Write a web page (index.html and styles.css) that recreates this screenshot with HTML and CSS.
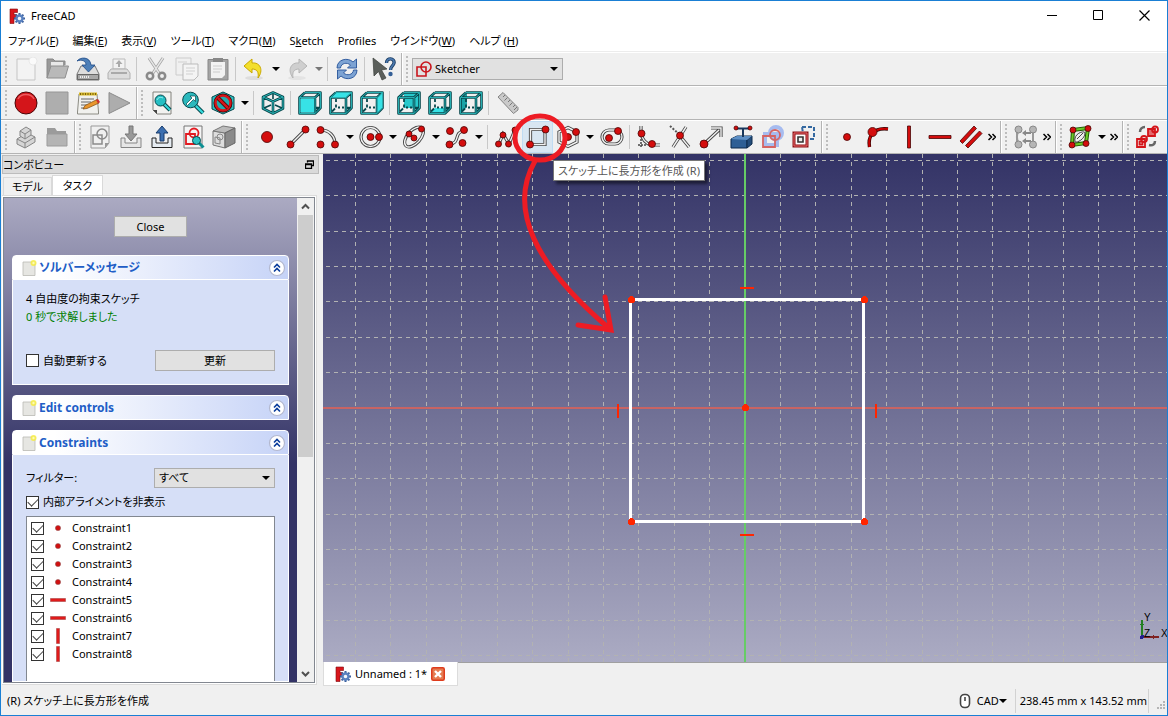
FILE: index.html
```html
<!DOCTYPE html>
<html lang="ja">
<head>
<meta charset="utf-8">
<title>FreeCAD</title>
<link rel="stylesheet" href="styles.css">
</head>
<body>
<svg class="defs" aria-hidden="true">
  <symbol id="logo" viewBox="0 0 16 16">
    <path d="M1 1H8.500V4.500H5V6.500H7.500V9.500H5V15.500H1Z" fill="#d8161c" stroke="#7d0a0e" stroke-width=".6"/>
    <path d="M10.500 5V16M5 10.500H16M6.600 6.600L14.400 14.400M14.400 6.600L6.600 14.400" stroke="#3a5f9c" stroke-width="2"/>
    <circle cx="10.500" cy="10.500" r="3" fill="#f4f6fa" stroke="#5a82c0" stroke-width="2.400"/>
  </symbol>
  <symbol id="drop" viewBox="0 0 8 4"><path d="M0 0H8L4 4Z" fill="currentColor"/></symbol>
  <symbol id="more" viewBox="0 0 8 8"><path d="M.5 1L3.500 4L.5 7M4.500 1L7.500 4L4.500 7" fill="none" stroke="#000" stroke-width="1.500"/></symbol>
  <symbol id="wire" viewBox="0 0 24 24">
    <g fill="none" stroke="#07484d" stroke-width="2.600" stroke-linejoin="round"><path d="M1.500 6.500H17V22.500H1.500ZM7 1.500H22.500V17H17M1.500 6.500L7 1.500M17 6.500L22.500 1.500M17 22.500L22.500 17"/><path d="M7 8V11M7 13.500V16.500M9 16.500H11M13 16.500H15M3 20.500L6 17.500" stroke-width="1.800"/></g>
    <path d="M1.500 6.500H17V22.500H1.500ZM7 1.500H22.500V17M1.500 6.500L7 1.500M17 6.500L22.500 1.500M17 22.500L22.500 17" fill="none" stroke="#2bb9bb" stroke-width=".9"/>
  </symbol>
  <symbol id="page" viewBox="0 0 16 16">
    <path d="M2 2H14V15.500H2Z" fill="#e6e6e2" stroke="#b9b9b4" stroke-width=".8"/><circle cx="12.500" cy="3" r="3" fill="#f8ee3a" opacity=".8"/><circle cx="12.500" cy="3" r="1.200" fill="#fffbb0"/>
  </symbol>
  <symbol id="fold" viewBox="0 0 18 18">
    <circle cx="9" cy="9" r="7.500" fill="#fff" stroke="#b3b8cf" stroke-width="1.200"/><path d="M6 8.500L9 5.500L12 8.500M6 12.500L9 9.500L12 12.500" fill="none" stroke="#0a3c9b" stroke-width="1.600"/>
  </symbol>
</svg>

<div class="window">
  <header class="titlebar">
    <svg class="logo"><use href="#logo"/></svg>
    <span class="app-name">FreeCAD</span>
    <button class="win-btn" aria-label="最小化"><svg viewBox="0 0 11 11"><path d="M0 5.500H10" stroke="#000"/></svg></button>
    <button class="win-btn" aria-label="最大化"><svg viewBox="0 0 11 11"><path d="M.5 .5H9.500V9.500H.5Z" fill="none" stroke="#000"/></svg></button>
    <button class="win-btn" aria-label="閉じる"><svg viewBox="0 0 11 11"><path d="M.5 .5L10.500 10.500M10.500 .5L.5 10.500" stroke="#000" stroke-width="1.200"/></svg></button>
  </header>
  <nav class="menu">
    <button>ファイル(<u>F</u>)</button><button>編集(<u>E</u>)</button><button>表示(<u>V</u>)</button><button>ツール(<u>T</u>)</button><button>マクロ(<u>M</u>)</button><button>S<u>k</u>etch</button><button>Profiles</button><button>ウインドウ(<u>W</u>)</button><button>ヘルプ (<u>H</u>)</button>
  </nav>

  <div class="bar-row">
    <div class="bar">
      <button class="tool" aria-label="新規"><svg viewBox="0 0 24 24"><path d="M3 2H21V23H3Z" fill="#f3f3f3" stroke="#c5c5c5"/><circle cx="19" cy="4" r="4" fill="#fafafa" stroke="#ddd" stroke-width=".6"/></svg></button>
      <button class="tool" aria-label="開く"><svg viewBox="0 0 24 24"><path d="M2 21V2H8L10 4H20V8" fill="#999" stroke="#888"/><path d="M6 5H18V10H6Z" fill="#e8e8e8"/><path d="M2 21L6 9H23.500L20 21Z" fill="#b9b9b9" stroke="#8e8e8e"/></svg></button>
      <button class="tool" aria-label="保存"><svg viewBox="0 0 24 24"><path d="M5 9H19L23 17V23H1V17Z" fill="#ddd" stroke="#777"/><path d="M1.500 17.500H22.500V22.500H1.500Z" fill="#a8a8a8" stroke="#666"/><path d="M4 20H13" stroke="#eee" stroke-width="2" stroke-dasharray="1 1"/><path d="M1 4C4 0 14 -1 15 8H19L12.500 15L6 8H10C10 4 6 2 1 4Z" fill="#4d7fb8" stroke="#204a87" stroke-width=".8"/></svg></button>
      <button class="tool" aria-label="印刷"><svg viewBox="0 0 24 24"><path d="M6 2H18V12H6Z" fill="#f2f2f2" stroke="#bbb"/><path d="M12 3L8.500 7H11V10H13V7H15.500Z" fill="#aaa"/><path d="M4 12H20L23 16V22H1V16Z" fill="#ddd" stroke="#b0b0b0"/><path d="M4 16H20" stroke="#999" stroke-width="1.500"/></svg></button>
      <i class="sep"></i>
      <button class="tool" aria-label="切り取り"><svg viewBox="0 0 24 24"><path d="M5 1L15 16M19 1L9 16" stroke="#a0a0a0" stroke-width="3"/><path d="M5 1L15 16M19 1L9 16" stroke="#e5e5e5" stroke-width="1.400"/><g fill="none" stroke="#8a8a8a" stroke-width="2.500"><circle cx="6" cy="19" r="3.200"/><circle cx="18" cy="19" r="3.200"/></g></svg></button>
      <button class="tool" aria-label="コピー"><svg viewBox="0 0 24 24"><path d="M1 1H16V18H1Z" fill="#f0f0f0" stroke="#ccc"/><path d="M8 7H23V19L19 23H8Z" fill="#f4f4f4" stroke="#bbb"/><path d="M3 5H12M11 11H20M11 14H20M11 17H18" stroke="#d0d0d0"/></svg></button>
      <button class="tool" aria-label="貼り付け"><svg viewBox="0 0 24 24"><path d="M2 2.500H22V23H2Z" fill="#a4a4a4" stroke="#888"/><path d="M5 5H19V18L16 21H5Z" fill="#f2f2f2"/><path d="M7 1H17V5H7Z" fill="#888"/><path d="M7 9H16M7 12H16M7 15H14" stroke="#ccc"/></svg></button>
      <i class="sep"></i>
      <button class="tool drop" aria-label="元に戻す"><svg viewBox="0 0 24 24"><ellipse cx="12" cy="21" rx="9" ry="2" fill="#ddd"/><path d="M2 9L10 2V6C18 5 22 13 16 21C17 15 15 12 10 12V16Z" fill="#f3df2c" stroke="#c9a800"/></svg><svg class="arrow"><use href="#drop"/></svg></button>
      <button class="tool drop" aria-label="やり直し"><svg viewBox="0 0 24 24"><ellipse cx="12" cy="21" rx="9" ry="2" fill="#e3e3e3"/><path d="M22 9L14 2V6C6 5 2 13 8 21C7 15 9 12 14 12V16Z" fill="#cfcfcf" stroke="#b5b5b5"/></svg><svg class="arrow dim"><use href="#drop"/></svg></button>
      <i class="sep"></i>
      <button class="tool" aria-label="更新"><svg viewBox="0 0 24 24"><g fill="#7da3d3" stroke="#27539a" stroke-width=".9"><path d="M2 11C2 2 13 0 18 5L21.500 2V11H12.500L15.500 8C12 5 6 6 5.500 11Z"/><path d="M22 13C22 22 11 24 6 19L2.500 22V13H11.500L8.500 16C12 19 18 18 18.500 13Z"/></g></svg></button>
      <i class="sep"></i>
      <button class="tool" aria-label="ヘルプ"><svg viewBox="0 0 24 24"><path d="M1 1L15 12L9.500 13L14 21L10 23L6.500 14.500L2 19Z" fill="#5b5f5b" stroke="#3a3d3a" stroke-width=".7"/><path d="M14.500 6C14.500 0 23 1 22 6C21.500 9 18.500 9 18.500 13" fill="none" stroke="#1d3f66" stroke-width="3.400"/><path d="M14.500 6C14.500 0 23 1 22 6C21.500 9 18.500 9 18.500 13" fill="none" stroke="#4c7ab0" stroke-width="1.600"/><circle cx="18.500" cy="17" r="2.200" fill="#345f96"/></svg></button>
    </div>
    <div class="bar last">
      <label class="workbench">
        <svg class="wb-icon" viewBox="0 0 16 16"><g fill="none" stroke="#c9151c" stroke-width="1.600"><path d="M1 6H10V15H1Z"/><circle cx="10" cy="6" r="5"/></g></svg>
        <select aria-label="ワークベンチ"><option>Sketcher</option></select>
        <svg class="arrow"><use href="#drop"/></svg>
      </label>
    </div>
  </div>

  <div class="bar-row">
    <div class="bar">
      <button class="tool" aria-label="マクロの記録"><svg viewBox="0 0 24 24"><circle cx="12" cy="12" r="11" fill="#d4151a" stroke="#4a0507"/><path d="M4 8C7 2 17 2 20 8" fill="none" stroke="#ee5a5e" stroke-width="1.500"/></svg></button>
      <button class="tool" aria-label="記録の停止"><svg viewBox="0 0 24 24"><path d="M1 1H23V23H1Z" fill="#aeaeae" stroke="#969696"/></svg></button>
      <button class="tool" aria-label="マクロ"><svg viewBox="0 0 24 24"><path d="M3 3H21L22.500 21V23H1.500V21Z" fill="#f1f1ee" stroke="#8c8c84"/><path d="M3 1.500H21V4.500H3Z" fill="#d9b92a"/><path d="M4 3H21" stroke="#7b6410" stroke-width="2" stroke-dasharray="1 1.500"/><path d="M5 8H18M5 11H15M5 14H12M5 17H9" stroke="#666"/><path d="M7 18L9 14.500L21 8.500L23 12L11 17.500Z" fill="#e9962d" stroke="#7b4a10" stroke-width=".7"/><path d="M20 9L22 8L24 11L22 12.500Z" fill="#cc3030"/></svg></button>
      <button class="tool" aria-label="マクロの実行"><svg viewBox="0 0 24 24"><path d="M2 1.500L23 12L2 22.500Z" fill="#adadad" stroke="#8c8c8c"/></svg></button>
    </div>
    <div class="bar last">
      <button class="tool" aria-label="全てにフィット"><svg viewBox="0 0 24 24"><path d="M3 1H21V23H7L3 19Z" fill="#f2f2f0" stroke="#82827c"/><path d="M3 19H7V23Z" fill="#444"/><path d="M14 13L20 19" stroke="#07484d" stroke-width="4"/><path d="M14 13L20 19" stroke="#35d9dc" stroke-width="2"/><circle cx="10.500" cy="9.500" r="5.500" fill="#25bfc3" stroke="#07484d"/><path d="M7 9C8 6 11 6 13 7" stroke="#a0f2f3" fill="none"/></svg></button>
      <button class="tool" aria-label="選択にフィット"><svg viewBox="0 0 24 24"><path d="M14 14L22 22" stroke="#07484d" stroke-width="4.500"/><path d="M14 14L22 22" stroke="#35d9dc" stroke-width="2.400"/><circle cx="9.500" cy="9" r="7.800" fill="#2cb9bd" stroke="#07484d"/><path d="M5 13L11 7L9 5H14.500V10.500L12.500 8.500L6.500 14.500Z" fill="#fff" stroke="#07484d" stroke-width=".7"/></svg></button>
      <button class="tool drop" aria-label="描画スタイル"><svg viewBox="0 0 24 24"><path d="M12 1L23 6V18L12 23L1 18V6Z" fill="#2ebfc2" stroke="#07484d"/><circle cx="12" cy="12" r="7.500" fill="#555" stroke="#3c0000" stroke-width="4"/><circle cx="12" cy="12" r="7.500" fill="#25a9ac" stroke="#d4151a" stroke-width="2.500"/><path d="M7 7L17 17" stroke="#3c0000" stroke-width="4"/><path d="M7 7L17 17" stroke="#d4151a" stroke-width="2.500"/></svg><svg class="arrow"><use href="#drop"/></svg></button>
      <i class="sep"></i>
      <button class="tool" aria-label="アイソメトリック"><svg viewBox="0 0 24 24"><g fill="none" stroke-linejoin="round"><path d="M12 1.500L22 6V17.500L12 22.500L2 17.500V6ZM2 6L12 10.500L22 6M12 10.500V22.500" stroke="#07484d" stroke-width="2.600"/><path d="M12 2V8M3 17L10 14M21 17L14 14" stroke="#07484d" stroke-width="1.600"/><path d="M12 1.500L22 6V17.500L12 22.500L2 17.500V6ZM2 6L12 10.500L22 6M12 10.500V22.500" stroke="#2bb9bb"/></g></svg></button>
      <i class="sep"></i>
      <button class="tool" aria-label="前面"><svg viewBox="0 0 24 24"><use href="#wire"/><path d="M2.500 7.500H16V21.500H2.500Z" fill="#37e2e6"/></svg></button>
      <button class="tool" aria-label="上面"><svg viewBox="0 0 24 24"><use href="#wire"/><path d="M3 6L7.500 2H21.500L17 6Z" fill="#37e2e6"/></svg></button>
      <button class="tool" aria-label="右面"><svg viewBox="0 0 24 24"><use href="#wire"/><path d="M17.500 7L22 2.500V17L17.500 21.500Z" fill="#37e2e6"/></svg></button>
      <i class="sep"></i>
      <button class="tool" aria-label="背面"><svg viewBox="0 0 24 24"><path d="M7 2H22V17H7Z" fill="#28c8cb"/><use href="#wire"/></svg></button>
      <button class="tool" aria-label="底面"><svg viewBox="0 0 24 24"><path d="M2 22L7 17H22L17 22Z" fill="#37e2e6"/><use href="#wire"/></svg></button>
      <button class="tool" aria-label="左面"><svg viewBox="0 0 24 24"><path d="M2 7L8 2V16L2 22Z" fill="#1ba3a6"/><use href="#wire"/></svg></button>
      <i class="sep"></i>
      <button class="tool" aria-label="距離を測定"><svg viewBox="0 0 24 24"><path d="M2 6L7 1.500L22 16.500V19L17.500 22.500Z" fill="#c9c9c9" stroke="#858585"/><path d="M9 4L7 6M11.500 6.500L8.500 9.500M14 9L12 11M16.500 11.500L13.500 14.500M19 14L17 16M21 16L18 19" stroke="#777"/></svg></button>
    </div>
  </div>

  <div class="bar-row">
    <div class="bar">
      <button class="tool" aria-label="パーツ"><svg viewBox="0 0 24 24"><g fill="#d5d5d5" stroke="#858585" stroke-linejoin="round"><path d="M3 14L13 8L21 12V17L11 23L3 19Z"/><path d="M3 14L11 18L21 12M11 18V23" fill="none"/><path d="M6 6L12 2L17 5V10L11 14L6 11Z"/><path d="M6 6L11 9L17 5M11 9V14" fill="none"/></g></svg></button>
      <button class="tool" aria-label="グループ"><svg viewBox="0 0 24 24"><path d="M2 3H10L12 6H21V20H2Z" fill="#9b9b9b"/><path d="M2 9H22V21H2Z" fill="#b4b4b4" stroke="#9b9b9b"/></svg></button>
    </div>
    <div class="bar">
      <button class="tool" aria-label="スケッチを作成"><svg viewBox="0 0 24 24"><path d="M3 1H21V18L17 23H3Z" fill="#f0f0f0" stroke="#999"/><path d="M21 18H17V23Z" fill="#999"/><g fill="none" stroke="#8a8a8a" stroke-width="1.500"><path d="M5 10H14V19H5Z"/><circle cx="14" cy="9" r="5"/></g></svg></button>
      <button class="tool" aria-label="スケッチを編集"><svg viewBox="0 0 24 24"><path d="M2 13V22.500H22V13H18V18H6V13Z" fill="#e6e6e6" stroke="#858585"/><path d="M10 1H14V9H18L12 16L6 9H10Z" fill="#999" stroke="#777"/></svg></button>
      <button class="tool" aria-label="スケッチを終了"><svg viewBox="0 0 24 24"><path d="M2 13V22.500H22V13H18V18H6V13Z" fill="#e6ecf2" stroke="#222"/><path d="M10 16H14V8H18L12 1L6 8H10Z" fill="#3c6fb0" stroke="#173b6c"/></svg></button>
      <button class="tool" aria-label="スケッチを表示"><svg viewBox="0 0 24 24"><path d="M3 1H21V23H3Z" fill="#f5f5f5" stroke="#777"/><g fill="none" stroke="#e21b22" stroke-width="1.800"><path d="M5 9H14V19H5Z"/><circle cx="13" cy="8" r="4.500"/></g><path d="M18 18L22.500 22.500" stroke="#0c8f93" stroke-width="3"/><circle cx="15.500" cy="15.500" r="4" fill="#2cc0c4" stroke="#07484d"/></svg></button>
      <button class="tool" aria-label="面にマップ"><svg viewBox="0 0 24 24"><path d="M1 6L13 8V23L1 20Z" fill="#ddd" stroke="#777"/><path d="M1 6L11 1L23 3L13 8Z" fill="#bbb" stroke="#777"/><path d="M13 8L23 3V18L13 23Z" fill="#8a8a8a" stroke="#666"/><path d="M3 12L8 13V19L3 18Z" fill="none" stroke="#888"/><circle cx="8" cy="12" r="3" fill="none" stroke="#888"/></svg></button>
    </div>
    <div class="bar">
      <button class="tool" aria-label="点"><svg viewBox="0 0 24 24"><circle class="dot" cx="12" cy="12" r="5.500"/></svg></button>
      <button class="tool" aria-label="線分"><svg viewBox="0 0 24 24"><path class="edge" d="M5 19L19 5"/><path class="core" d="M5 19L19 5"/><circle class="dot" cx="4.500" cy="19.500" r="3.500"/><circle class="dot" cx="19.500" cy="4.500" r="3.500"/></svg></button>
      <button class="tool drop" aria-label="円弧"><svg viewBox="0 0 24 24"><path class="edge" d="M5 5C13 5 19 11 19 19"/><path class="core" d="M5 5C13 5 19 11 19 19"/><circle class="dot" cx="4.500" cy="5" r="3.500"/><circle class="dot" cx="4.500" cy="19.500" r="3.500"/><circle class="dot" cx="19" cy="19.500" r="3.500"/></svg><svg class="arrow"><use href="#drop"/></svg></button>
      <button class="tool drop" aria-label="円"><svg viewBox="0 0 24 24"><circle class="edge" cx="11.500" cy="12" r="9.500"/><circle class="core" cx="11.500" cy="12" r="9.500"/><circle class="dot" cx="11.500" cy="12" r="3.500"/><circle class="dot" cx="20" cy="12" r="3.500"/></svg><svg class="arrow"><use href="#drop"/></svg></button>
      <button class="tool drop" aria-label="楕円"><svg viewBox="0 0 24 24"><g transform="rotate(-48 12 12)"><ellipse class="edge" cx="12" cy="12" rx="12" ry="6.500"/><ellipse class="core" cx="12" cy="12" rx="12" ry="6.500"/></g><circle class="dot" cx="19.500" cy="4" r="3"/><circle class="dot" cx="7" cy="9" r="3"/><circle class="dot" cx="12" cy="13" r="3"/></svg><svg class="arrow"><use href="#drop"/></svg></button>
      <button class="tool drop" aria-label="スプライン"><svg viewBox="0 0 24 24"><path class="edge" d="M4 19C16 19 8 7 19 6"/><path class="core" d="M4 19C16 19 8 7 19 6"/><circle class="dot" cx="5" cy="6" r="3.500"/><circle class="dot" cx="19" cy="5" r="3.500"/><circle class="dot" cx="4.500" cy="19.500" r="3.500"/><circle class="dot" cx="17.500" cy="18" r="3.500"/></svg><svg class="arrow"><use href="#drop"/></svg></button>
      <i class="sep"></i>
      <button class="tool" aria-label="ポリライン"><svg viewBox="0 0 24 24"><path class="edge" d="M4 19L8 9L14 19L20 5"/><path class="core" d="M4 19L8 9L14 19L20 5"/><circle class="dot" cx="3.500" cy="19" r="3"/><circle class="dot" cx="8" cy="10" r="3"/><circle class="dot" cx="13.500" cy="19" r="3"/><circle class="dot" cx="20" cy="5" r="3"/></svg></button>
      <div class="marked">
        <button class="tool hot" aria-label="長方形" aria-describedby="tip"><svg viewBox="0 0 24 24"><path class="edge" d="M4.500 4.500H19V19.500H4.500Z"/><path class="core" d="M4.500 4.500H19V19.500H4.500Z"/><circle class="dot" cx="4" cy="19.500" r="3.500"/><circle class="dot" cx="19.500" cy="4.500" r="3.500"/></svg></button>
        <svg class="annotation" viewBox="510 112 110 225"><ellipse cx="540" cy="138" rx="25" ry="22"/><path d="M535 161C508 208 534 265 610 329M605 297L611 330L578 325"/></svg>
        <div class="tooltip" id="tip" role="tooltip">スケッチ上に長方形を作成 (R)</div>
      </div>
      <button class="tool drop" aria-label="多角形"><svg viewBox="0 0 24 24"><path class="edge" d="M12 2.500L21 7V17L12 21.500L3 17V7Z"/><path class="core" d="M12 2.500L21 7V17L12 21.500L3 17V7Z"/><circle class="dot" cx="12" cy="12" r="3.500"/><circle class="dot" cx="20" cy="7" r="3.500"/></svg><svg class="arrow"><use href="#drop"/></svg></button>
      <button class="tool" aria-label="長円形"><svg viewBox="0 0 24 24"><rect class="edge" x="2" y="5" width="20" height="14" rx="7"/><rect class="core" x="2" y="5" width="20" height="14" rx="7"/><circle class="dot" cx="9" cy="13" r="3.500"/><circle class="dot" cx="18" cy="6" r="3.500"/></svg></button>
      <i class="sep"></i>
      <button class="tool" aria-label="フィレット"><svg viewBox="0 0 24 24"><path class="edge" d="M4 1V8C5 14 8 18 14 20H23"/><path class="core" d="M4 1V8C5 14 8 18 14 20H23"/><path d="M4 14V23M1 20H10" stroke="#444" stroke-width="1.500" stroke-dasharray="2 1"/><circle class="dot" cx="4.500" cy="8.500" r="3.500"/><circle class="dot" cx="15" cy="19" r="3.500"/></svg></button>
      <button class="tool" aria-label="トリム"><svg viewBox="0 0 24 24"><path class="edge" d="M5 22L18 2M12 11L21 22"/><path class="core" d="M5 22L18 2M12 11L21 22"/><path d="M2 1L11 9" stroke="#555" stroke-width="2" stroke-dasharray="2 1.500"/><circle class="dot" cx="12" cy="10.500" r="3.500"/></svg></button>
      <button class="tool" aria-label="延長"><svg viewBox="0 0 24 24"><path class="edge" d="M5 19L20 5M12 3H22V12"/><path class="core" d="M5 19L20 5M12 3H22V12"/><circle class="dot" cx="5" cy="19" r="4"/></svg></button>
      <button class="tool" aria-label="外部形状"><svg viewBox="0 0 24 24"><path d="M1 14L7 11H22L17 15V23H1Z" fill="#2e5f95" stroke="#0c2a4d"/><path d="M17 15L22 11V19L17 23Z" fill="#234c7a" stroke="#0c2a4d"/><path d="M1 14L7 11H22L17 15Z" fill="#5d8fc5"/><path d="M6 3.500H20M13 4V12" stroke="#17375c" stroke-width="2"/><circle class="dot" cx="6" cy="3" r="2"/><circle class="dot" cx="20" cy="3" r="2"/></svg></button>
      <button class="tool" aria-label="カーボンコピー"><svg viewBox="0 0 24 24"><g fill="none" stroke="#7fa0ef" stroke-width="4" opacity=".65"><path d="M4 9H16V20H4Z"/><circle cx="15" cy="8" r="6"/></g><g fill="none" stroke="#d56464" stroke-width="1.800"><path d="M2 11H14V22H2Z"/><circle cx="14" cy="10" r="5"/></g></svg></button>
      <button class="tool" aria-label="構築モード"><svg viewBox="0 0 24 24"><path d="M10 2H22V14H12Z" fill="none" stroke="#3468a0" stroke-width="2" stroke-dasharray="4 2"/><path d="M2 8H15V21H2Z" fill="#fff" stroke="#8b1015" stroke-width="3"/><path d="M2 8H15V21H2Z" fill="none" stroke="#ec6a6e"/><path d="M6 12H11V17H6Z" fill="#eee" stroke="#333" stroke-width="1.600"/></svg></button>
    </div>
    <div class="bar">
      <button class="tool" aria-label="一致拘束"><svg viewBox="0 0 24 24"><circle class="dot" cx="12" cy="12" r="3.500"/></svg></button>
      <button class="tool" aria-label="オブジェクト上の点"><svg viewBox="0 0 24 24"><path d="M3.500 22C2 14 5 2 22 4" fill="none" stroke="#300" stroke-width="3.400"/><path d="M3.500 22C2 14 5 2 22 4" fill="none" stroke="#c00" stroke-width="2"/><circle class="dot" cx="6.500" cy="7" r="4.500"/></svg></button>
      <button class="tool" aria-label="垂直拘束"><svg viewBox="0 0 24 24"><path class="red" d="M10.500 1H13.500V23H10.500Z"/></svg></button>
      <button class="tool" aria-label="水平拘束"><svg viewBox="0 0 24 24"><path class="red" d="M1 10.500H23V13.500H1Z"/></svg></button>
      <button class="tool" aria-label="平行拘束"><svg viewBox="0 0 24 24"><path class="red" d="M1 16L15 1L17.500 3.500L3.500 18.500ZM6.500 20.500L20.500 6L23 8.500L9 23Z"/></svg></button>
      <button class="more" aria-label="さらに表示"><svg><use href="#more"/></svg></button>
    </div>
    <div class="bar">
      <button class="tool" aria-label="対称"><svg viewBox="0 0 24 24"><path d="M5 5C2 10 2 14 5 19M19 5V19M3 5V19" fill="none" stroke="#999" stroke-width="2"/><path d="M17 7H12V5L8 8L12 11V9H17ZM17 17H12V19L8 16L12 13V15H17Z" fill="#888"/><g fill="#b5b5b5" stroke="#888"><circle cx="4.500" cy="4.500" r="3.500"/><circle cx="19" cy="4.500" r="3.500"/><circle cx="4.500" cy="19.500" r="3.500"/><circle cx="19" cy="19.500" r="3.500"/></g></svg></button>
      <button class="more" aria-label="さらに表示"><svg><use href="#more"/></svg></button>
    </div>
    <div class="bar">
      <button class="tool drop" aria-label="B-スプライン"><svg viewBox="0 0 24 24"><path d="M5 5L20 3L18 18L4 20Z" fill="#eee" stroke="#1e5a00" stroke-width="4"/><path d="M5 5L20 3L18 18L4 20Z" fill="none" stroke="#6cc82a" stroke-width="2"/><path d="M7 17C5 8 17 5 17 8C17 14 9 18 7 17ZM9 14L15 8" fill="none" stroke="#444"/><circle class="dot" cx="5" cy="5" r="3"/><circle class="dot" cx="20" cy="3.500" r="3"/><circle class="dot" cx="18" cy="18.500" r="3"/><circle class="dot" cx="4" cy="20" r="3"/></svg><svg class="arrow"><use href="#drop"/></svg></button>
      <button class="more" aria-label="さらに表示"><svg><use href="#more"/></svg></button>
    </div>
    <div class="bar last">
      <button class="tool" aria-label="仮想スペース"><svg viewBox="0 0 24 24"><g fill="none" stroke="#d4151a" stroke-width="1.800"><path d="M12 4H19V11H12Z" fill="#e36a6d"/><circle cx="19" cy="4.500" r="3"/><path d="M1 14H9V22H1ZM3.500 16.500H6.500V19.500H3.500Z"/><circle cx="8" cy="14" r="3"/></g><path d="M4 7C4 4 6 2 9 2M19 16C19 19 17 21 13 20" fill="none" stroke="#666" stroke-width="2.500"/></svg></button>
    </div>
  </div>

  <main class="work">
    <aside class="dock">
      <div class="dock-title"><span>コンボビュー</span><button aria-label="フロート"><svg viewBox="0 0 9 9"><path d="M2.500 2.500V1H8.500V5.500H6.500M.5 4H6.500V8.500H.5ZM.5 4.500H6.500M2.500 1H8.500" fill="none" stroke="#000" stroke-width="1.300"/></svg></button></div>
      <div class="tabs" role="tablist"><button role="tab">モデル</button><button role="tab" class="on" aria-selected="true">タスク</button></div>
      <div class="pane">
        <div class="scroller">
          <div class="tasks">
            <button class="btn close-task">Close</button>
            <section class="group">
              <h2><svg class="page-ico"><use href="#page"/></svg>ソルバーメッセージ<button aria-label="折りたたむ"><svg><use href="#fold"/></svg></button></h2>
              <div class="group-body solver">
                <p>4 自由度の拘束スケッチ</p>
                <p class="ok">0 秒で求解しました</p>
                <div class="line update"><label class="check"><input type="checkbox">自動更新する</label><button class="btn">更新</button></div>
              </div>
            </section>
            <section class="group">
              <h2><svg class="page-ico"><use href="#page"/></svg>Edit controls<button aria-label="折りたたむ"><svg><use href="#fold"/></svg></button></h2>
            </section>
            <section class="group grow">
              <h2><svg class="page-ico"><use href="#page"/></svg>Constraints<button aria-label="折りたたむ"><svg><use href="#fold"/></svg></button></h2>
              <div class="group-body constraints">
                <div class="line"><label for="filter">フィルター:</label><span class="filter"><select id="filter"><option>すべて</option></select><svg class="arrow"><use href="#drop"/></svg></span></div>
                <label class="check"><input type="checkbox" checked>内部アライメントを非表示</label>
                <ul class="list">
                  <li><label><input type="checkbox" checked><svg viewBox="0 0 16 16"><circle cx="8" cy="8" r="2.600" fill="#d01010" stroke="#855" stroke-width=".5"/></svg>Constraint1</label></li>
                  <li><label><input type="checkbox" checked><svg viewBox="0 0 16 16"><circle cx="8" cy="8" r="2.600" fill="#d01010" stroke="#855" stroke-width=".5"/></svg>Constraint2</label></li>
                  <li><label><input type="checkbox" checked><svg viewBox="0 0 16 16"><circle cx="8" cy="8" r="2.600" fill="#d01010" stroke="#855" stroke-width=".5"/></svg>Constraint3</label></li>
                  <li><label><input type="checkbox" checked><svg viewBox="0 0 16 16"><circle cx="8" cy="8" r="2.600" fill="#d01010" stroke="#855" stroke-width=".5"/></svg>Constraint4</label></li>
                  <li><label><input type="checkbox" checked><svg viewBox="0 0 16 16"><path d="M.5 6.500H15.500V9.500H.5Z" fill="#e01b1b" stroke="#a44" stroke-width=".6"/></svg>Constraint5</label></li>
                  <li><label><input type="checkbox" checked><svg viewBox="0 0 16 16"><path d="M.5 6.500H15.500V9.500H.5Z" fill="#e01b1b" stroke="#a44" stroke-width=".6"/></svg>Constraint6</label></li>
                  <li><label><input type="checkbox" checked><svg viewBox="0 0 16 16"><path d="M6.500 .5H9.500V15.500H6.500Z" fill="#e01b1b" stroke="#a44" stroke-width=".6"/></svg>Constraint7</label></li>
                  <li><label><input type="checkbox" checked><svg viewBox="0 0 16 16"><path d="M6.500 .5H9.500V15.500H6.500Z" fill="#e01b1b" stroke="#a44" stroke-width=".6"/></svg>Constraint8</label></li>
                </ul>
              </div>
            </section>
          </div>
          <div class="scrollbar"><svg viewBox="0 0 17 17"><path d="M5 10.500L8.500 7L12 10.500" fill="none" stroke="#505050" stroke-width="2"/></svg><i class="thumb"></i><svg viewBox="0 0 17 17"><path d="M5 7L8.500 10.500L12 7" fill="none" stroke="#505050" stroke-width="2"/></svg></div>
        </div>
      </div>
    </aside>

    <section class="document">
      <svg class="view" viewBox="323 154 844 508" preserveAspectRatio="xMidYMid slice" shape-rendering="crispEdges">
        <g fill="none" stroke="#b2b2b2" stroke-dasharray="4 4">
          <path d="M355.500 154V662M390.500 154V662M426.500 154V662M461.500 154V662M497.500 154V662M532.500 154V662M568.500 154V662M603.500 154V662M638.500 154V662M674.500 154V662M709.500 154V662M780.500 154V662M815.500 154V662M851.500 154V662M886.500 154V662M922.500 154V662M957.500 154V662M992.500 154V662M1028.500 154V662M1063.500 154V662M1098.500 154V662M1134.500 154V662"/>
          <path d="M326 160.500H1167M326 195.500H1167M326 231.500H1167M326 266.500H1167M326 301.500H1167M326 337.500H1167M326 372.500H1167M326 443.500H1167M326 478.500H1167M326 514.500H1167M326 549.500H1167M326 584.500H1167M326 620.500H1167M326 655.500H1167"/>
        </g>
        <path d="M323 408H1167" stroke="#c86464" stroke-width="2"/>
        <path d="M745 154V662" stroke="#66cc66" stroke-width="2"/>
        <path d="M630.500 299.500H863.500V521.500H630.500Z" fill="none" stroke="#fff" stroke-width="3"/>
        <path d="M740 288H754M740 535H754M618 404V418M876 404V418" stroke="#ff2600" stroke-width="2"/>
        <g fill="#ff2600"><circle cx="631.500" cy="299.500" r="3.500"/><circle cx="864.500" cy="299.500" r="3.500"/><circle cx="631.500" cy="521.500" r="3.500"/><circle cx="864.500" cy="521.500" r="3.500"/><circle cx="745.500" cy="407.500" r="3.500"/></g>
        <path d="M1142 637V620" stroke="#228022" stroke-width="2"/><path d="M1140 625L1142 621L1144 625Z" fill="#228022"/>
        <path d="M1142 637H1159" stroke="#802222" stroke-width="2"/><path d="M1153 635L1157 637L1153 639Z" fill="#802222"/><circle cx="1142" cy="637" r="2" fill="#222290"/>
        <g class="axis"><text x="1144" y="621">Y</text><text x="1144" y="637">Z</text><text x="1161" y="637">X</text></g>
      </svg>
      <div class="doc-tabs"><div class="doc-tab"><svg class="logo"><use href="#logo"/></svg><span>Unnamed : 1*</span><button aria-label="閉じる"><svg viewBox="0 0 14 14"><rect x=".75" y=".75" width="12.500" height="12.500" rx="1.500" fill="#e57b50" stroke="#de3b1c" stroke-width="1.500"/><path d="M4 4L10 10M10 4L4 10" stroke="#fff" stroke-width="2.400"/></svg></button></div></div>
    </section>
  </main>

  <footer class="status">
    <span class="message">(R) スケッチ上に長方形を作成</span>
    <button class="nav-style"><svg class="mouse" viewBox="0 0 12 16"><rect x="1.500" y="1.500" width="9" height="13" rx="4" fill="#fff" stroke="#444" stroke-width="1.600"/><path d="M6 4V8" stroke="#444" stroke-width="1.600"/></svg>CAD<svg class="arrow"><use href="#drop"/></svg></button>
    <span class="size">238.45 mm x 143.52 mm</span>
    <svg class="grip" viewBox="0 0 10 10"><path d="M7 0H9V2H7ZM4 3H6V5H4ZM7 3H9V5H7ZM1 6H3V8H1ZM4 6H6V8H4ZM7 6H9V8H7Z" fill="#b5b5b5"/></svg>
  </footer>
</div>
</body>
</html>
```
FILE: styles.css
```css
* { box-sizing: border-box; }
body {
  margin: 0;
  font: 11px/16px "Noto Sans", "Noto Sans CJK JP", sans-serif;
  font-feature-settings: "palt";
  color: #000;
}
button, select, input { font: inherit; font-feature-settings: inherit; color: inherit; margin: 0; }
button { background: none; border: 0; padding: 0; }
svg { display: block; }
p, h2, ul { margin: 0; padding: 0; }
.defs { position: absolute; width: 0; height: 0; }

.window {
  min-height: 100vh;
  display: flex;
  flex-direction: column;
  background: #f0f0f0;
  border: 1px solid #1a7fd4;
}

.titlebar { display: flex; align-items: center; height: 29px; padding-left: 8px; background: #fff; }
.logo { width: 16px; height: 16px; }
.app-name { flex: 1; padding-left: 6px; }
.win-btn { width: 46px; height: 29px; display: grid; place-items: center; }
.win-btn svg { width: 11px; height: 11px; }

.menu { display: flex; height: 22px; gap: 14px; padding: 0 7px; background: #fff; border-bottom: 1px solid #ececec; }
.menu button { white-space: nowrap; }

.bar-row { display: flex; height: 34px; border-top: 1px solid #fff; border-bottom: 1px solid #b4b4b4; }
.bar { display: flex; align-items: center; border-right: 1px solid #b4b4b4; padding-right: 2px; box-shadow: 1px 0 0 #fff; }
.bar.last { border-right: 0; box-shadow: none; }
.bar::before {
  content: "";
  width: 2px;
  height: 26px;
  margin: 0 3px 0 4px;
  background: repeating-linear-gradient(#bdbdbd 0 2px, transparent 2px 4px);
}
.tool { width: 31px; height: 32px; display: flex; align-items: center; justify-content: center; flex: none; }
.tool > svg:first-child { width: 24px; height: 24px; flex: none; }
.tool.drop { width: 43px; gap: 6px; padding-left: 1px; }
.arrow { width: 8px; height: 4px; flex: none; }
.dim { color: #777; }
.sep { width: 1px; height: 24px; margin: 0 3px 0 2px; background: #c8c8c8; }
.more { width: 12px; height: 32px; display: grid; place-items: center; }
.more svg { width: 8px; height: 8px; }
.hot { background: #d8e6f2; border: 1px solid #c0dcf3; }
.dot { fill: #d40d0d; stroke: #4a0505; stroke-width: .8; }
.edge { fill: none; stroke: #444; stroke-width: 3.2; }
.core { fill: none; stroke: #f2f2f2; stroke-width: 1.4; }
.red { fill: #d40d0d; stroke: #4a0505; stroke-width: .8; }

.workbench { position: relative; display: flex; align-items: center; width: 151px; margin-left: 1px; }
.workbench select { width: 100%; height: 22px; padding: 0 18px 0 22px; appearance: none; background: #e1e1e1; border: 1px solid #adadad; border-radius: 0; }
.wb-icon { position: absolute; left: 4px; width: 16px; height: 16px; }
.workbench .arrow, .filter .arrow { position: absolute; right: 5px; }

.marked { position: relative; z-index: 2; }
.annotation { position: absolute; left: -12px; top: -9px; width: 110px; height: 225px; fill: none; stroke: #ed1c24; stroke-width: 5; stroke-linecap: round; pointer-events: none; }
.tooltip { position: absolute; left: 31px; top: 39px; height: 21px; padding: 1px 4px; background: #fff; border: 1px solid #767676; box-shadow: 3px 3px 3px rgba(0, 0, 0, .5); color: #575757; line-height: 17px; white-space: nowrap; }

.work { flex: 1; display: flex; min-height: 0; }
.dock { width: 322px; flex: none; display: flex; flex-direction: column; padding: 1px 4px 1px 1px; }
.dock-title { display: flex; align-items: center; justify-content: space-between; height: 19px; padding: 0 4px 0 0; border: 1px solid #bcbcbc; background: #dadada; }
.dock-title svg { width: 9px; height: 9px; }
.tabs { display: flex; align-items: flex-end; height: 21px; padding-left: 1px; }
.tabs button { width: 49px; height: 18px; border: 1px solid #d9d9d9; border-bottom: 0; }
.tabs .on { width: 51px; height: 20px; background: #fff; }
.pane { flex: 1; display: flex; margin-right: 2px; padding: 1px; border: 1px solid #dcdcdc; border-left: 0; background: #fff; }
.scroller { flex: 1; display: flex; border: 1px solid #828790; }
.tasks { flex: 1; display: flex; flex-direction: column; gap: 10px; padding: 18px 8px 0; background: linear-gradient(#abaac2, #333366 265px); }
.btn { height: 21px; background: #e1e1e1; border: 1px solid #adadad; }
.close-task { align-self: center; width: 73px; margin-bottom: 8px; }
.group.grow { flex: 1; display: flex; flex-direction: column; }
.group h2 { display: flex; align-items: center; height: 25px; padding: 0 2px 0 8px; border-radius: 4px 4px 0 0; border: 1px solid #fff; background: linear-gradient(90deg, #fff 15%, #c6d3f7); color: #215dc6; font-size: 12px; font-weight: 700; }
.group h2 button { margin-left: auto; }
.group h2 button svg { width: 18px; height: 18px; }
.page-ico { width: 16px; height: 16px; margin-right: 2px; }
.group-body { background: #d6dff7; border: 1px solid #fff; border-top: 0; padding: 0 13px; }
.solver { height: 105px; padding-top: 10px; }
.solver p { line-height: 18px; }
.ok { color: #008000; }
.line { display: flex; align-items: center; justify-content: space-between; }
.update { margin-top: 24px; }
.update .btn { width: 120px; }
.check { display: flex; align-items: center; gap: 4px; }
input[type="checkbox"] { appearance: none; width: 13px; height: 13px; flex: none; background: #fff; border: 1px solid #333; display: grid; place-items: center; }
input[type="checkbox"]:checked::before { content: ""; width: 9px; height: 5px; border: solid #444; border-width: 0 0 1px 1px; transform: translateY(-1px) rotate(-45deg); }
.constraints { flex: 1; display: flex; flex-direction: column; padding-top: 13px; }
.filter { position: relative; display: flex; align-items: center; width: 121px; }
.filter select { width: 100%; height: 20px; padding: 0 18px 0 4px; appearance: none; background: #e1e1e1; border: 1px solid #adadad; border-radius: 0; }
.constraints .check { margin: 6px 0; }
.list { flex: 1; list-style: none; padding: 2px 4px; background: #fff; border: 1px solid #828790; border-bottom: 0; }
.list label { display: flex; align-items: center; height: 18px; }
.list svg { width: 16px; height: 16px; margin: 0 6px; }
.scrollbar { width: 17px; flex: none; display: flex; flex-direction: column; background: #f0f0f0; }
.scrollbar svg { width: 17px; height: 17px; }
.thumb { height: 50%; margin: 0 1px; margin-bottom: auto; background: #cdcdcd; }

.document { flex: 1; min-width: 0; display: flex; flex-direction: column; }
.view { flex: 1; min-height: 0; width: 100%; height: 508px; background: linear-gradient(#333366, #ababc3); }
.axis { font-size: 10px; font-family: "Liberation Sans", sans-serif; }
.doc-tabs { display: flex; height: 24px; border-top: 1px solid #a0a0a0; }
.doc-tab { display: flex; align-items: center; gap: 4px; height: 24px; margin-top: -1px; padding: 0 12px 0 11px; background: #fff; border: 1px solid #dcdcdc; border-top: 0; }
.doc-tab button svg { width: 14px; height: 14px; }

.status { display: flex; align-items: center; height: 29px; padding-left: 6px; }
.message { flex: 1; }
.nav-style { display: flex; align-items: center; padding-right: 8px; }
.mouse { width: 12px; height: 16px; margin-right: 6px; }
.size { padding: 4px 1px 4px 4px; border: solid #d2d2d2; border-width: 0 1px; }
.grip { width: 10px; height: 10px; margin: 10px 1px 0 7px; }
```
